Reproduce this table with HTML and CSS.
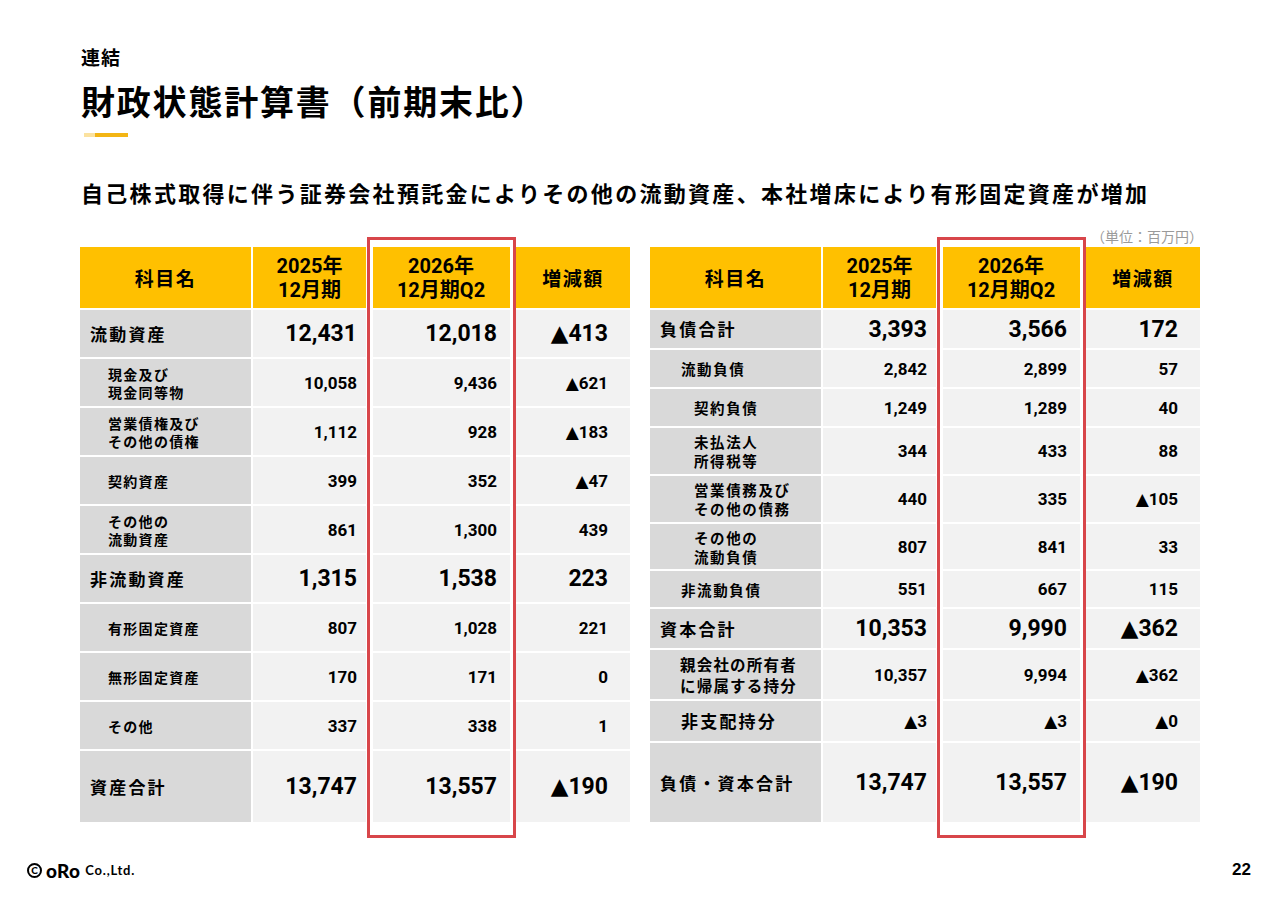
FILE: index.html
```html
<!DOCTYPE html>
<html lang="ja">
<head>
<meta charset="utf-8">
<title>財政状態計算書（前期末比）</title>
<link rel="stylesheet" href="styles.css">
</head>
<body>
<div class="slide">
  <header class="head">
    <div class="kicker">連結</div>
    <h1 class="title">財政状態計算書（前期末比）</h1>
    <div class="accent"><span class="a1"></span><span class="a2"></span></div>
  </header>
  <p class="lead">自己株式取得に伴う証券会社預託金によりその他の流動資産、本社増床により有形固定資産が増加</p>
  <div class="unit">（単位：百万円）</div>

  <div class="tables">
    <div class="tbl tbl-l">
      <div class="h hj">科目名</div>
      <div class="h">2025年<br>12月期</div>
      <div class="h">2026年<br>12月期Q2</div>
      <div class="h hj">増減額</div>

      <div class="l m">流動資産</div>
      <div class="v big c2">12,431</div><div class="v big c3">12,018</div><div class="v big c4">▲413</div>

      <div class="l s">現金及び<br>現金同等物</div>
      <div class="v c2">10,058</div><div class="v c3">9,436</div><div class="v c4">▲621</div>

      <div class="l s">営業債権及び<br>その他の債権</div>
      <div class="v c2">1,112</div><div class="v c3">928</div><div class="v c4">▲183</div>

      <div class="l s">契約資産</div>
      <div class="v c2">399</div><div class="v c3">352</div><div class="v c4">▲47</div>

      <div class="l s">その他の<br>流動資産</div>
      <div class="v c2">861</div><div class="v c3">1,300</div><div class="v c4">439</div>

      <div class="l m">非流動資産</div>
      <div class="v big c2">1,315</div><div class="v big c3">1,538</div><div class="v big c4">223</div>

      <div class="l s">有形固定資産</div>
      <div class="v c2">807</div><div class="v c3">1,028</div><div class="v c4">221</div>

      <div class="l s">無形固定資産</div>
      <div class="v c2">170</div><div class="v c3">171</div><div class="v c4">0</div>

      <div class="l s">その他</div>
      <div class="v c2">337</div><div class="v c3">338</div><div class="v c4">1</div>

      <div class="l m">資産合計</div>
      <div class="v big c2">13,747</div><div class="v big c3">13,557</div><div class="v big c4">▲190</div>

      <div class="hl"></div>
    </div>

    <div class="tbl tbl-r">
      <div class="h hj">科目名</div>
      <div class="h">2025年<br>12月期</div>
      <div class="h">2026年<br>12月期Q2</div>
      <div class="h hj">増減額</div>

      <div class="l m">負債合計</div>
      <div class="v big c2">3,393</div><div class="v big c3">3,566</div><div class="v big c4">172</div>

      <div class="l rs1">流動負債</div>
      <div class="v c2">2,842</div><div class="v c3">2,899</div><div class="v c4">57</div>

      <div class="l rs2">契約負債</div>
      <div class="v c2">1,249</div><div class="v c3">1,289</div><div class="v c4">40</div>

      <div class="l rs2">未払法人<br>所得税等</div>
      <div class="v c2">344</div><div class="v c3">433</div><div class="v c4">88</div>

      <div class="l rs2">営業債務及び<br>その他の債務</div>
      <div class="v c2">440</div><div class="v c3">335</div><div class="v c4">▲105</div>

      <div class="l rs2">その他の<br>流動負債</div>
      <div class="v c2">807</div><div class="v c3">841</div><div class="v c4">33</div>

      <div class="l rs1">非流動負債</div>
      <div class="v c2">551</div><div class="v c3">667</div><div class="v c4">115</div>

      <div class="l m">資本合計</div>
      <div class="v big c2">10,353</div><div class="v big c3">9,990</div><div class="v big c4">▲362</div>

      <div class="l rs1 own">親会社の所有者<br>に帰属する持分</div>
      <div class="v c2">10,357</div><div class="v c3">9,994</div><div class="v c4">▲362</div>

      <div class="l m ind">非支配持分</div>
      <div class="v c2">▲3</div><div class="v c3">▲3</div><div class="v c4">▲0</div>

      <div class="l m">負債・資本合計</div>
      <div class="v big c2">13,747</div><div class="v big c3">13,557</div><div class="v big c4">▲190</div>

      <div class="hl"></div>
    </div>
  </div>

  <footer class="foot">
    <div class="logo"><span class="copy">C</span><span class="oro">oRo</span><span class="co">Co.,Ltd.</span></div>
    <div class="page">22</div>
  </footer>
</div>
</body>
</html>
```

FILE: styles.css
```css
html, body {
  margin: 0;
  padding: 0;
  background: #ffffff;
}

body {
  font-family: "Noto Sans CJK JP", sans-serif;
  color: #000000;
}

.slide {
  width: 1280px;
  height: 904px;
  position: relative;
  overflow: hidden;
}

.head {
  padding-left: 81px;
}

.kicker {
  padding-top: 45px;
  font-size: 19px;
  line-height: 24px;
  font-weight: 700;
  letter-spacing: 1px;
}

.title {
  margin: 10px 0 0;
  font-size: 34px;
  line-height: 44px;
  font-weight: 700;
  letter-spacing: 1.8px;
}

.accent {
  display: flex;
  margin: 10px 0 0 3px;
  height: 4px;
}

.a1 {
  width: 11px;
  background: #fbe2a0;
}

.a2 {
  width: 33px;
  background: #f3b514;
}

.lead {
  margin: 40px 0 0 81px;
  font-size: 22px;
  line-height: 30px;
  font-weight: 700;
  letter-spacing: 2.3px;
}

.unit {
  margin-top: 21px;
  padding-right: 77px;
  text-align: right;
  font-size: 14px;
  line-height: 16px;
  color: #9a9a9a;
}

.tables {
  margin-top: 3px;
  padding-left: 80px;
  display: flex;
  gap: 20px;
}

.tbl {
  position: relative;
  width: 550px;
  display: grid;
  grid-template-columns: 171px 113px 146px 114px;
  gap: 2px;
}

.tbl-l {
  grid-template-rows: 61px repeat(9, 47px) 71px;
}

.tbl-r {
  grid-template-rows: 61px 38px 37px 37px 46px 46px 45px 36px 39px 49px 40px 79px;
}

.h {
  background: #ffc000;
  display: flex;
  flex-direction: column;
  align-items: center;
  justify-content: center;
  text-align: center;
  font-family: "Roboto", "Noto Sans CJK JP", sans-serif;
  font-weight: 700;
  font-size: 20px;
  line-height: 24px;
}

.hj {
  font-family: "Noto Sans CJK JP", sans-serif;
  font-size: 19px;
  letter-spacing: 1.5px;
}

.l {
  background: #d9d9d9;
  display: flex;
  flex-direction: column;
  justify-content: center;
  font-weight: 700;
}

.m {
  font-size: 17px;
  line-height: 22px;
  letter-spacing: 2.2px;
  padding-left: 10px;
}

.s {
  font-size: 14px;
  line-height: 18px;
  letter-spacing: 1.3px;
  padding-left: 28px;
}

.rs1 {
  font-size: 14.5px;
  line-height: 19px;
  letter-spacing: 1.6px;
  padding-left: 31px;
}

.rs2 {
  font-size: 14.5px;
  line-height: 19px;
  letter-spacing: 1.6px;
  padding-left: 44px;
}

.own {
  font-size: 15.5px;
  line-height: 21px;
  letter-spacing: 1.2px;
  padding-left: 30px;
}

.ind {
  padding-left: 31px;
}

.v {
  background: #f2f2f2;
  display: flex;
  align-items: center;
  justify-content: flex-end;
  font-family: "Roboto", "DejaVu Sans", "Noto Sans CJK JP", sans-serif;
  font-weight: 700;
  font-size: 17px;
}

.big {
  font-size: 23px;
}

.c2 {
  padding-right: 9px;
}

.c3 {
  padding-right: 17px;
}

.c4 {
  padding-right: 22px;
}

.hl {
  position: absolute;
  left: 287px;
  top: -10px;
  width: 149px;
  height: 601px;
  box-sizing: border-box;
  border: 3px solid #d8464a;
  box-shadow: inset 0 0 0 3px #ffffff;
  pointer-events: none;
}

.foot {
  margin-top: 38px;
  display: flex;
  justify-content: space-between;
  align-items: center;
  height: 20px;
  padding: 0 29px 0 27px;
}

.logo {
  display: flex;
  align-items: center;
  font-family: "Lato", sans-serif;
  font-weight: 900;
}

.copy {
  width: 11px;
  height: 11px;
  border: 2.5px solid #000;
  border-radius: 50%;
  display: inline-flex;
  align-items: center;
  justify-content: center;
  font-size: 10px;
  line-height: 10px;
  font-weight: 900;
  margin-right: 4px;
}

.oro {
  font-size: 19px;
  letter-spacing: 0.3px;
  margin-right: 5px;
}

.co {
  font-size: 13px;
  font-weight: 700;
  letter-spacing: 0.8px;
}

.page {
  font-family: "Liberation Sans", sans-serif;
  font-weight: 700;
  font-size: 17px;
}
```
